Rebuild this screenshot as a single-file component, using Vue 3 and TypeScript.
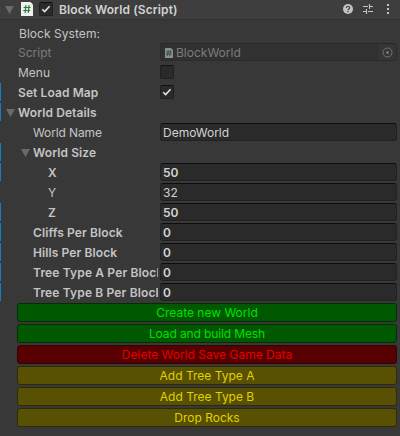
<script setup lang="ts">
interface Row {
  label: string
  kind: 'text' | 'check' | 'none'
  value?: string
  checked?: boolean
  indent: number
  bold?: boolean
  fold?: boolean
  spacing?: 'wide' | 'tight'
}

interface Action {
  label: string
  tone: 'green' | 'red' | 'yellow'
  spacing?: 'tight'
}

const rows: Row[] = [
  { label: 'Menu', kind: 'check', checked: false, indent: 0 },
  { label: 'Set Load Map', kind: 'check', checked: true, indent: 0, bold: true },
  { label: 'World Details', kind: 'none', indent: 0, bold: true, fold: true },
  { label: 'World Name', kind: 'text', value: 'DemoWorld', indent: 1, spacing: 'tight' },
  { label: 'World Size', kind: 'none', indent: 1, bold: true, fold: true },
  { label: 'X', kind: 'text', value: '50', indent: 2, bold: true },
  { label: 'Y', kind: 'text', value: '32', indent: 2 },
  { label: 'Z', kind: 'text', value: '50', indent: 2, bold: true },
  { label: 'Cliffs Per Block', kind: 'text', value: '0', indent: 1, bold: true },
  { label: 'Hills Per Block', kind: 'text', value: '0', indent: 1, bold: true },
  { label: 'Tree Type A Per Block', kind: 'text', value: '0', indent: 1, bold: true, spacing: 'wide' },
  { label: 'Tree Type B Per Block', kind: 'text', value: '0', indent: 1, bold: true, spacing: 'wide' },
]

const actions: Action[] = [
  { label: 'Create new World', tone: 'green' },
  { label: 'Load and build Mesh', tone: 'green', spacing: 'tight' },
  { label: 'Delete World Save Game Data', tone: 'red' },
  { label: 'Add Tree Type A', tone: 'yellow' },
  { label: 'Add Tree Type B', tone: 'yellow' },
  { label: 'Drop Rocks', tone: 'yellow' },
]
</script>

<template>
  <section class="inspector">
    <header class="header">
      <svg class="arrow" width="9" height="8" viewBox="0 0 9 8"><path d="M0 0h9L4.500 8z" fill="#6a6a6a" /></svg>
      <svg class="script-icon" width="12" height="14" viewBox="0 0 12 14">
        <path d="M0 0h9.500L12 2.500V14H0z" fill="#f0f0f0" />
        <path d="M5 3.200L4 10.800M8.200 3.200L7.200 10.800M2.600 5.500h7M2.200 8.500h7" stroke="#2a7a38" stroke-width="1.200" fill="none" />
      </svg>
      <span class="check">
        <svg width="12" height="12" viewBox="0 0 12 12"><path d="M2.300 6.200l2.300 2.400 5-5.400" fill="none" stroke="#e8e8e8" stroke-width="1.500" /></svg>
      </span>
      <h1 class="title">Block World (Script)</h1>
      <div class="tools">
        <svg width="10" height="10" viewBox="0 0 10 10">
          <circle cx="5" cy="5" r="5" fill="#c4c4c4" />
          <path d="M3.400 3.900c0-2.200 3.300-2.100 3.300-.2C6.700 4.900 5 4.900 5 6.200M5 7.100v1.200" fill="none" stroke="#3e3e3e" stroke-width="1.200" />
        </svg>
        <svg width="10" height="10" viewBox="0 0 10 10">
          <path d="M0 2.500h5M7 2.500h3M0 7.500h3M5 7.500h5M6.500 0v5M3.500 5v5" fill="none" stroke="#c4c4c4" stroke-width="1.100" />
        </svg>
        <svg class="dots" width="2" height="10" viewBox="0 0 2 10"><path d="M0 0h2v2H0zM0 4h2v2H0zM0 8h2v2H0z" fill="#c4c4c4" /></svg>
      </div>
    </header>

    <div class="caption">Block System:</div>

    <div class="rows">
      <div class="row disabled">
        <div class="label"><span>Script</span></div>
        <div class="field object">
          <svg class="mini" width="8" height="10" viewBox="0 0 8 10">
            <path d="M0 0h6l2 2v8H0z" fill="#8c8c8c" />
            <path d="M3.200 2.200l-.7 5.600M5.600 2.200l-.7 5.600M1.300 4h5.400M1 6.200h5.400" stroke="#31583a" fill="none" />
          </svg>
          <span class="object-name">BlockWorld</span>
          <span class="picker">
            <svg width="11" height="11" viewBox="0 0 11 11">
              <circle cx="5.500" cy="5.500" r="4.500" fill="none" stroke="#777" />
              <circle cx="5.500" cy="5.500" r="1.500" fill="#777" />
            </svg>
          </span>
        </div>
      </div>

      <div
        v-for="row in rows"
        :key="row.label"
        class="row"
        :class="[`indent-${row.indent}`, row.spacing, { bold: row.bold }]"
      >
        <div class="label">
          <svg v-if="row.fold" class="arrow" width="9" height="8" viewBox="0 0 9 8"><path d="M0 0h9L4.500 8z" fill="#6a6a6a" /></svg>
          <span>{{ row.label }}</span>
        </div>
        <div v-if="row.kind === 'text'" class="field">{{ row.value }}</div>
        <span v-else-if="row.kind === 'check'" class="check">
          <svg v-if="row.checked" width="12" height="12" viewBox="0 0 12 12"><path d="M2.300 6.200l2.300 2.400 5-5.400" fill="none" stroke="#e8e8e8" stroke-width="1.500" /></svg>
        </span>
      </div>
    </div>

    <div class="actions">
      <button v-for="action in actions" :key="action.label" type="button" :class="[action.tone, action.spacing]">{{ action.label }}</button>
    </div>
  </section>
</template>

<style>
body {
  background: #383838;
}
</style>

<style scoped>
.inspector {
  box-sizing: border-box;
  width: 400px;
  height: 436px;
  overflow: hidden;
  background: #383838;
  color: #c4c4c4;
  font: 12px/18px Inter, sans-serif;
}
.header {
  display: flex;
  align-items: center;
  box-sizing: border-box;
  height: 20px;
  padding: 0 11px 1px 5px;
  background: #3e3e3e;
  border-bottom: 1px solid #303030;
}
.arrow {
  display: block;
  flex: none;
}
.header .arrow {
  margin-top: 2px;
}
.script-icon {
  margin-left: 7px;
}
.check {
  display: flex;
  flex: none;
  align-items: center;
  justify-content: center;
  box-sizing: border-box;
  width: 14px;
  height: 14px;
  background: #2a2a2a;
  border: 1px solid #202020;
  border-top-color: #111;
  border-radius: 2px;
}
.header .check {
  margin-left: 6px;
}
.row .check {
  margin-bottom: 1px;
}
.title {
  margin: 0 0 0 6px;
  padding-top: 2px;
  color: #d2d2d2;
  font-size: 12px;
  font-weight: 600;
  letter-spacing: 0.12px;
}
.tools {
  display: flex;
  align-items: center;
  gap: 10px;
  margin-left: auto;
}
.dots {
  margin-left: 4px;
}
.caption {
  height: 18px;
  padding: 5px 0 0 19px;
  letter-spacing: 0.05px;
}
.rows {
  display: flex;
  flex-direction: column;
  gap: 2px;
}
.row {
  display: flex;
  align-items: center;
  box-sizing: border-box;
  height: 18px;
  padding-right: 3px;
  border-left: 1px solid transparent;
}
.row.bold {
  border-left-color: #0f81be;
  font-weight: 600;
  letter-spacing: 0.1px;
}
.row.wide {
  letter-spacing: 0.15px;
}
.tight {
  letter-spacing: -0.12px;
}
.label {
  display: flex;
  align-items: center;
  box-sizing: border-box;
  width: 157px;
  height: 18px;
  margin-right: 2px;
  padding-left: 17px;
  overflow: hidden;
  line-height: 20px;
  white-space: nowrap;
}
.label span {
  padding-top: 1px;
}
.indent-1 .label {
  padding-left: 32px;
}
.indent-2 .label {
  padding-left: 47px;
}
.label .arrow {
  margin: 1px 3px 0 -12px;
}
.field {
  flex: 1;
  box-sizing: border-box;
  height: 18px;
  padding-left: 2px;
  color: #d2d2d2;
  letter-spacing: 0;
  line-height: 18px;
  background: #2a2a2a;
  border: 1px solid #212121;
  border-top-color: #0d0d0d;
  border-radius: 3px;
}
.disabled {
  color: #7c7c7c;
}
.object {
  display: flex;
  align-items: center;
  padding-left: 4px;
  color: #7c7c7c;
  background: #313131;
  border-color: #2b2b2b;
  border-top-color: #272727;
}
.mini {
  margin: 2px 3px 0 0;
}
.object-name {
  padding-top: 1px;
}
.picker {
  display: flex;
  align-items: center;
  justify-content: center;
  width: 18px;
  height: 16px;
  margin-left: auto;
  background: #353535;
}
.actions {
  display: grid;
  gap: 2px;
  padding: 2px 3px 0 17px;
}
button {
  box-sizing: border-box;
  height: 19px;
  padding: 0;
  border: 1px solid;
  border-radius: 3px;
  font: inherit;
  line-height: 17px;
}
.green {
  color: #00e000;
  background: #005800;
  border-color: #052e05;
}
.red {
  color: #e00000;
  background: #580000;
  border-color: #2c0505;
}
.yellow {
  color: #e0d000;
  background: #585002;
  border-color: #2f2b06;
}
button.tight {
  letter-spacing: -0.12px;
}
</style>
